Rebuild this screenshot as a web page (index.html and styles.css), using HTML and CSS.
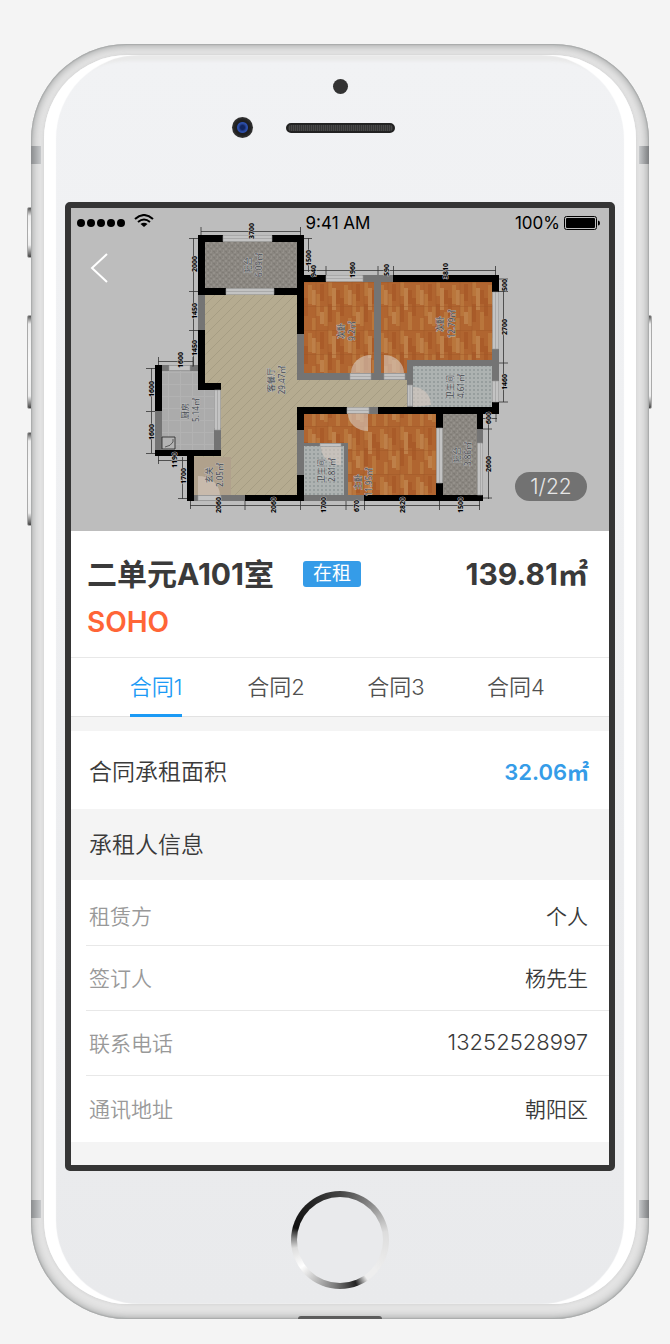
FILE: index.html
```html
<!DOCTYPE html>
<html lang="zh-CN">
<head>
<meta charset="utf-8">
<meta name="viewport" content="width=device-width, initial-scale=1">
<title>二单元A101室</title>
<link rel="stylesheet" href="styles.css">
</head>
<body>
<div class="phone">
  <span class="side-key key-mute"></span>
  <span class="side-key key-up"></span>
  <span class="side-key key-down"></span>
  <span class="side-key key-power"></span>
  <div class="shell">
    <span class="band band-tl"></span><span class="band band-tr"></span>
    <span class="band band-bl"></span><span class="band band-br"></span>
    <span class="face"></span>
    <span class="port"></span>
    <div class="earpiece">
      <span class="sensor"></span>
      <div class="earpiece-row"><span class="camera"></span><span class="speaker"></span></div>
    </div>
    <main class="screen">
      <section class="hero">
        <svg class="plan" viewBox="71 208 538 323" role="img" aria-label="户型图">
          <defs>
            <pattern id="wood" width="36" height="48" patternUnits="userSpaceOnUse" x="304" y="282">
              <rect width="36" height="48" fill="#b06530"/>
              <path fill="#b9763c" d="M4 3h4v19H4zM12 12h4v22h-4zM24 0h4v14h-4zM20 24h4v20h-4zM32 30h4v18h-4zM8 36h4v12H8z"/>
              <path fill="#be8049" d="M8 8h4v15H8zM28 6h4v22h-4zM16 30h4v12h-4z"/>
              <path fill="#a95b29" d="M0 16h4v18H0zM16 2h4v17h-4zM24 22h4v18h-4zM32 8h4v14h-4z"/>
              <path stroke="#9c5727" stroke-width=".4" d="M0 .5h36M12 0v48M24 0v48M0 24.5h36"/>
            </pattern>
            <pattern id="hatch" width="10" height="10" patternUnits="userSpaceOnUse">
              <rect width="10" height="10" fill="#b5ab90"/>
              <path stroke="#9f967e" stroke-width=".7" d="M-1 11L11-1M-1 1L1-1M9 11L11 9"/>
            </pattern>
            <pattern id="dots" width="4" height="4" patternUnits="userSpaceOnUse">
              <rect width="4" height="4" fill="#adb2b1"/><circle cx="2" cy="2" r=".7" fill="#717c7c"/>
            </pattern>
            <pattern id="stone" width="6" height="6" patternUnits="userSpaceOnUse">
              <rect width="6" height="6" fill="#8a8680"/>
              <path fill="#95918b" d="M0 0h2v1H0zM3 2h2v2H3zM1 4h1v2H1z"/><path fill="#807c76" d="M4 0h1v1H4zM0 2h2v1H0zM3 5h2v1H3z"/>
            </pattern>
            <pattern id="tile" width="12" height="12" patternUnits="userSpaceOnUse">
              <rect width="12" height="12" fill="#ababab"/><path stroke="#b2b2b2" d="M0 .5h12M.5 0v12"/>
            </pattern>
          </defs>
          <rect x="71" y="208" width="538" height="323" fill="#bdbdbd"/>
          <!-- floors -->
          <path fill="url(#hatch)" d="M204 294H298V379H408V408H298V496H193V456H220V385H204z"/>
          <path fill="#b0a18c" d="M194 457h37v38h-37z"/>
          <path fill="url(#stone)" d="M204 241h94v48h-94zM442 413h36v82h-36z"/>
          <path fill="url(#tile)" d="M161 371h37v14h17v65h-54z"/>
          <path fill="url(#wood)" d="M304 281h71v93h-71zM381 281h112v80h-84v14h-28zM304 413h133v82H304z"/>
          <path fill="url(#dots)" d="M413 366h80v41h-80zM304 446h41v49h-41z"/>
          <!-- partition walls -->
          <path fill="#747474" d="M198 291h7v40h-7zM297 334h7v46h-7zM297 373h116v7H297zM374 276h7v104h-7zM362 275h31v7h-31zM407 360h92v6h-92zM407 360h6v47h-6zM492 349h7v32h-7zM155 411h7v40h-7zM161 365h37v6h-37zM214 428h7v23h-7zM187 495h58v6h-58zM297 429h7v47h-7zM304 443h44v3h-44zM344 443h4v52h-4zM304 495h60v6h-60zM368 407h10v7h-10zM477 428h6v16h-6z"/>
          <!-- bearing walls -->
          <path d="M198 235h25v7h-25zM272 235h32v7h-32zM198 235h7v57h-7zM297 235h7v99h-7zM198 288h28v7h-28zM274 288h30v7h-30zM198 330h7v60h-7zM198 383h23v7h-23zM155 365h7v46h-7zM155 450h66v6h-66zM187 455h7v46h-7zM245 495h59v6h-59zM297 475h7v26h-7zM297 407h50v7h-50zM297 407h7v23h-7zM304 275h22v7h-22zM393 275h106v7H393zM492 275h7v17h-7zM378 407h121v7H378zM492 402h7v12h-7zM436 408h7v20h-7zM436 483h7v18h-7zM364 495h119v6H364zM477 408h6v21h-6z"/>
          <!-- windows and doorways -->
          <g fill="#c3c3c3" stroke="#999" stroke-width=".6">
            <path d="M223 235.500h49v6h-49zM223 238.500h49M226 288.500h48v6h-48zM226 291.500h48M326 275.500h37v6h-37zM326 278.500h37M492.500 292h6v57h-6zM495.500 292v57M492.500 381h6v21h-6zM495.500 381v21M169 365.500h21v5h-21zM214.500 390h6v40h-6zM217.500 390v40M198 495.500h23v5h-23zM436.500 428h6v55h-6zM439.500 428v55M477.500 443h5v52h-5zM480.500 443v52M350 373.500h21v6h-21zM350 376.500h21M384 373.500h21v6h-21zM384 376.500h21M347 407.500h22v6h-22zM347 410.500h22M407.500 385h5v21h-5zM410 385v21M320 443.500h21v3h-21z"/>
          </g>
          <g fill="#d8cbc2" fill-opacity=".6">
            <path d="M371 373h-20a20 18 0 0 1 20-18zM384 373h20a20 18 0 0 0-20-18zM368 414v17a20 17 0 0 1-20-17zM413 387a18 18 0 0 1 18 18l-18 2zM341 447v18a20 18 0 0 1-20-18zM198 495v-19a22 19 0 0 1 22 19z"/>
          </g>
          <path fill="#b3b3b3" stroke="#222" stroke-width=".8" d="M162 437h13v12h-13z"/>
          <path fill="none" stroke="#333" stroke-width=".7" d="M173 439v3q-2 4-8 5"/>
          <!-- dimension lines -->
          <path fill="none" stroke="#333" stroke-width=".8" d="M201 231.500H301M201 227v8M300.500 227v8M193.500 238V366M189 238.500h9M189 291.500h9M189 330.500h9M308.500 238v34M304 238.500h8M304 270.500H496M326 266v9M378 266v9M393.500 266v9M495.500 266v9M503.500 279V402M499 279h9M499 291.500h9M499 363h9M499 402h9M158 361.500h35M158.500 357v8M193 357v10M151.500 368v85M146 368.500h9M146 411.500h9M146 453.500h9M158 460.500h29M158.500 456v8M182.500 457v42M178 498.500h9M190 505.500H480M190.500 501v8M245 501v9M300.500 501v9M346 501v9M364.500 501v9M439.500 501v9M479.500 501v9M488.500 414v85M483 429h9M483 498h9M483 418.500h14M496 414v8"/>
          <g class="dims">
            <text transform="translate(254 231) rotate(-90)">3700</text>
            <text transform="translate(197 264) rotate(-90)">2000</text>
            <text transform="translate(197 311) rotate(-90)">1450</text>
            <text transform="translate(197 348) rotate(-90)">1450</text>
            <text transform="translate(183 360) rotate(-90)">1600</text>
            <text transform="translate(311 258) rotate(-90)">1500</text>
            <text transform="translate(316 271) rotate(-90)">940</text>
            <text transform="translate(355 270) rotate(-90)">1960</text>
            <text transform="translate(389 270) rotate(-90)">590</text>
            <text transform="translate(448 271) rotate(-90)">3810</text>
            <text transform="translate(507 285) rotate(-90)">500</text>
            <text transform="translate(507 327) rotate(-90)">2700</text>
            <text transform="translate(507 382) rotate(-90)">1460</text>
            <text transform="translate(491 418) rotate(-90)">600</text>
            <text transform="translate(491 464) rotate(-90)">2600</text>
            <text transform="translate(154 389) rotate(-90)">1600</text>
            <text transform="translate(154 432) rotate(-90)">1600</text>
            <text transform="translate(177 460) rotate(-90)">1190</text>
            <text transform="translate(186 476) rotate(-90)">1700</text>
            <text transform="translate(221 505) rotate(-90)">2060</text>
            <text transform="translate(276 505) rotate(-90)">2060</text>
            <text transform="translate(326 505) rotate(-90)">1700</text>
            <text transform="translate(359 506) rotate(-90)">670</text>
            <text transform="translate(405 505) rotate(-90)">2820</text>
            <text transform="translate(463 505) rotate(-90)">1500</text>
          </g>
          <g class="rooms">
            <text transform="translate(251 265) rotate(-90)">阳台</text><text transform="translate(262 265) rotate(-90)">6.09㎡</text>
            <text transform="translate(344 331) rotate(-90)">次卧</text><text transform="translate(355 331) rotate(-90)">9.2㎡</text>
            <text transform="translate(443 324) rotate(-90)">次卧</text><text transform="translate(455 324) rotate(-90)">12.79㎡</text>
            <text transform="translate(274 380) rotate(-90)">客餐厅</text><text transform="translate(285 380) rotate(-90)">29.47㎡</text>
            <text transform="translate(188 411) rotate(-90)">厨房</text><text transform="translate(199 410) rotate(-90)">5.14㎡</text>
            <text transform="translate(212 475) rotate(-90)">玄关</text><text transform="translate(223 475) rotate(-90)">2.05㎡</text>
            <text transform="translate(324 471) rotate(-90)">卫生间</text><text transform="translate(335 470) rotate(-90)">2.81㎡</text>
            <text transform="translate(361 482) rotate(-90)">主卧</text><text transform="translate(372 482) rotate(-90)">11.95㎡</text>
            <text transform="translate(460 455) rotate(-90)">阳台</text><text transform="translate(471 454) rotate(-90)">3.86㎡</text>
            <text transform="translate(453 387) rotate(-90)">卫生间</text><text transform="translate(464 386) rotate(-90)">4.61㎡</text>
          </g>
        </svg>
        <div class="hero-top">
          <div class="status">
            <span class="signal">
              <svg width="50" height="10" viewBox="0 0 50 10"><circle cx="5" cy="5" r="4"/><circle cx="15" cy="5" r="4"/><circle cx="25" cy="5" r="4"/><circle cx="35" cy="5" r="4"/><circle cx="45" cy="5" r="4"/></svg>
              <svg class="wifi" width="20" height="14" viewBox="0 0 20 14" fill="none" stroke="#000" stroke-width="2"><path d="M1 5Q10-3 19 5M4 8q6-5 12 0"/><path fill="#000" stroke="none" d="M10 13L6.500 10q3.500-2.500 7 0z"/></svg>
            </span>
            <span class="clock">9:41 AM</span>
            <span class="power">100%
              <svg width="36" height="14" viewBox="0 0 36 14"><rect x=".5" y=".5" width="32" height="13" rx="2" fill="none" stroke="#000"/><rect x="2" y="2" width="29" height="10" rx="1"/><path d="M34 4.500q2 0 2 2.500t-2 2.500z"/></svg>
            </span>
          </div>
          <button class="back" type="button" aria-label="返回">
            <svg width="18" height="30" viewBox="0 0 18 30" fill="none" stroke="#fff" stroke-width="2"><path d="M17 1L2 15l15 14"/></svg>
          </button>
        </div>
        <span class="counter">1/22</span>
      </section>
      <header class="summary">
        <div class="title-row">
          <h1 class="title">二单元A101室</h1>
          <span class="tag">在租</span>
          <strong class="area">139.81㎡</strong>
        </div>
        <p class="kind">SOHO</p>
      </header>
      <nav class="tabs">
        <button class="tab is-active" type="button"><span>合同1</span></button>
        <button class="tab" type="button"><span>合同2</span></button>
        <button class="tab" type="button"><span>合同3</span></button>
        <button class="tab" type="button"><span>合同4</span></button>
      </nav>
      <dl class="leased">
        <dt>合同承租面积</dt><dd>32.06㎡</dd>
      </dl>
      <h2 class="heading">承租人信息</h2>
      <dl class="info">
        <div class="row"><dt>租赁方</dt><dd>个人</dd></div>
        <div class="row"><dt>签订人</dt><dd>杨先生</dd></div>
        <div class="row"><dt>联系电话</dt><dd class="number">13252528997</dd></div>
        <div class="row"><dt>通讯地址</dt><dd>朝阳区</dd></div>
      </dl>
    </main>
    <div class="chin"><button class="home" type="button" aria-label="主屏幕"></button></div>
  </div>
</div>
</body>
</html>
```
FILE: styles.css
```css
* { box-sizing: border-box; }
body {
  margin: 0;
  padding: 44px 21px 25px 31px;
  background: #f4f4f4;
  color: #3a3a3a;
  font-family: Inter, "Noto Sans CJK SC", sans-serif;
}
h1, h2, p, dl, dd { margin: 0; }
button { padding: 0; border: 0; background: none; font: inherit; color: inherit; }
svg { display: block; }

/* Device */
.phone { position: relative; }
.shell {
  position: relative;
  overflow: hidden;
  padding: 0 34px;
  border-radius: 96px;
  background: #e4e4e4;
  box-shadow: inset 0 0 1px 1px #a9abab, inset 0 0 9px 1px #9a9c9c;
}
.face {
  position: absolute;
  inset: 11px 13px 15px;
  border-radius: 84px;
  background: linear-gradient(#f1f2f4, #eff0f2 30%, #e9eaec);
  box-shadow: inset 12px 0 1px #fff, inset -12px 0 1px #fff, inset 0 6px 3px #e9e9e9, 0 0 3px 1px #d6d6d6;
}
.band { position: absolute; width: 10px; height: 18px; }
.band-tl, .band-bl { left: 0; background: linear-gradient(90deg, #8a8c8e, #c6c8ca); }
.band-tr, .band-br { right: 0; background: linear-gradient(270deg, #7d7f81, #c6c8ca); }
.band-tl, .band-tr { top: 102px; }
.band-bl, .band-br { bottom: 101px; }
.side-key {
  position: absolute;
  left: -4px;
  width: 6px;
  height: 94px;
  border: 1px solid #aaa;
  border-radius: 2px;
  background: linear-gradient(#555, #eee 8px, #f8f8f8 50%, #eee calc(100% - 12px), #444);
}
.key-mute { top: 163px; height: 51px; }
.key-up { top: 271px; }
.key-down { top: 388px; }
.key-power { top: 271px; left: auto; right: -3px; }
.port {
  position: absolute;
  bottom: 0;
  left: 50%;
  width: 84px;
  height: 3px;
  margin-left: -42px;
  border-radius: 6px 6px 0 0;
  background: #5c5c5c;
}
.earpiece { position: relative; height: 158px; padding-top: 35px; }
.sensor { display: block; width: 15px; height: 15px; margin: 0 auto; border-radius: 50%; background: #333; }
.earpiece-row {
  display: grid;
  grid-template-columns: 1fr 109px 1fr;
  align-items: center;
  margin-top: 23px;
}
.camera {
  justify-self: end;
  width: 21px;
  height: 21px;
  margin-right: 33px;
  border-radius: 50%;
  background: radial-gradient(circle, #10245e 2px, #2b4aa0 4px, #2a4da8 5px, #1d1d1f 6px, #222 8px, #333 10px);
}
.speaker {
  height: 10px;
  border: 2px solid #222;
  border-radius: 5px;
  background: repeating-linear-gradient(90deg, #333 0 1px, #484848 1px 2px);
}
.screen {
  position: relative;
  padding-bottom: 23px;
  border: 6px solid #353535;
  border-radius: 5px;
  background: #f4f4f4;
}
.chin { position: relative; display: flex; justify-content: center; padding: 20px 0 30px; }
.home {
  width: 98px;
  height: 98px;
  border: 6px solid transparent;
  border-radius: 50%;
  background:
    linear-gradient(#e9eaec, #e9eaec) padding-box,
    conic-gradient(#444, #888 40deg, #ddd 80deg, #eee 130deg, #eee 145deg, #222 160deg, #777 185deg, #bbb 210deg, #fff 235deg, #ddd 260deg, #888 272deg, #111 285deg, #222 320deg, #444) border-box;
}

/* Floor plan header */
.hero { position: relative; }
.plan { width: 100%; }
.dims {
  stroke: #bdbdbd;
  stroke-width: 1px;
  paint-order: stroke;
  font-family: "Noto Sans", sans-serif;
  font-size: 7px;
  font-weight: 700;
  text-anchor: middle;
}
.rooms {
  fill: #454a50;
  stroke: #c4c4c4;
  stroke-opacity: .8;
  stroke-width: 1px;
  paint-order: stroke;
  font-family: "Noto Sans", "Noto Sans CJK SC", sans-serif;
  font-size: 8px;
  text-anchor: middle;
}
.hero-top { position: absolute; top: 0; left: 0; right: 0; }
.status {
  display: grid;
  grid-template-columns: 1fr auto 1fr;
  align-items: center;
  height: 30px;
  padding: 0 9px 0 5px;
  color: #000;
  font-size: 17px;
}
.signal, .power { display: flex; align-items: center; }
.signal { gap: 8px; }
.wifi { margin-bottom: 5px; }
.power { justify-content: flex-end; gap: 4px; }
.back { display: block; margin: 15px 0 0 19px; }
.counter {
  position: absolute;
  right: 22px;
  bottom: 30px;
  width: 72px;
  border-radius: 15px;
  background: #727272;
  color: #e6e6e6;
  font-size: 21px;
  font-weight: 300;
  line-height: 29px;
  text-align: center;
}

/* Summary */
.summary { padding: 23px 21px 15px 16px; border-bottom: 1px solid #e8e8e8; background: #fff; }
.title-row { display: flex; align-items: center; height: 40px; }
.title { font-size: 30px; font-weight: 700; line-height: 40px; }
.tag {
  margin-left: 29px;
  padding: 0 10px;
  border-radius: 3px;
  background: #359ce8;
  color: #fff;
  font-size: 19px;
  font-weight: 400;
  line-height: 26px;
}
.area { margin-left: auto; font-size: 30px; font-weight: 700; line-height: 40px; }
.kind { margin-top: 8px; color: #ff6537; font-size: 28px; font-weight: 600; line-height: 40px; }

.tabs { display: flex; height: 59px; padding: 0 33px 0 25px; border-bottom: 1px solid #e2e2e2; background: #fff; }
.tab { display: flex; flex: 1; justify-content: center; color: #505050; font-size: 22px; font-weight: 350; }
.tab span { height: 59px; border-bottom: 3px solid transparent; line-height: 59px; }
.is-active { color: #1b9af5; }
.is-active span { border-color: #1b9af5; }

/* Contract details */
.leased {
  display: flex;
  align-items: center;
  justify-content: space-between;
  height: 78px;
  margin-top: 14px;
  padding: 0 20px 0 18px;
  background: #fff;
  font-size: 23px;
  font-weight: 350;
}
.leased dd { color: #359ce8; font-size: 22px; font-weight: 600; }
.heading { padding: 2px 0 0 18px; font-size: 23px; font-weight: 350; line-height: 69px; }
.info { padding: 0 0 0 15px; background: #fff; }
.row {
  display: flex;
  align-items: center;
  justify-content: space-between;
  height: 65px;
  padding: 0 21px 2px 3px;
  border-bottom: 1px solid #e8e8e8;
  font-size: 21px;
  font-weight: 350;
}
.row:first-child { height: 66px; padding-top: 6px; }
.row:last-child { height: 66px; border: 0; }
.row dt { color: #999; }
.row .number { font-size: 22px; font-weight: 300; }
```
